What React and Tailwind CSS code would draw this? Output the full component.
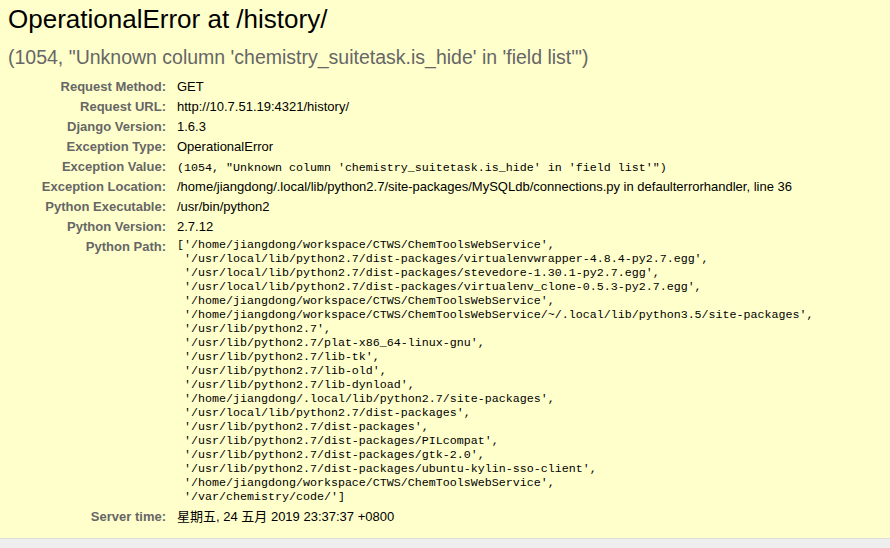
const sans = "font-['Liberation_Sans','Noto_Sans_CJK_SC',Arial,sans-serif]"
const mono = "font-['Liberation_Mono','Courier_New',monospace]"

const pythonPath = [
  "['/home/jiangdong/workspace/CTWS/ChemToolsWebService',",
  " '/usr/local/lib/python2.7/dist-packages/virtualenvwrapper-4.8.4-py2.7.egg',",
  " '/usr/local/lib/python2.7/dist-packages/stevedore-1.30.1-py2.7.egg',",
  " '/usr/local/lib/python2.7/dist-packages/virtualenv_clone-0.5.3-py2.7.egg',",
  " '/home/jiangdong/workspace/CTWS/ChemToolsWebService',",
  " '/home/jiangdong/workspace/CTWS/ChemToolsWebService/~/.local/lib/python3.5/site-packages',",
  " '/usr/lib/python2.7',",
  " '/usr/lib/python2.7/plat-x86_64-linux-gnu',",
  " '/usr/lib/python2.7/lib-tk',",
  " '/usr/lib/python2.7/lib-old',",
  " '/usr/lib/python2.7/lib-dynload',",
  " '/home/jiangdong/.local/lib/python2.7/site-packages',",
  " '/usr/local/lib/python2.7/dist-packages',",
  " '/usr/lib/python2.7/dist-packages',",
  " '/usr/lib/python2.7/dist-packages/PILcompat',",
  " '/usr/lib/python2.7/dist-packages/gtk-2.0',",
  " '/usr/lib/python2.7/dist-packages/ubuntu-kylin-sso-client',",
  " '/home/jiangdong/workspace/CTWS/ChemToolsWebService',",
  " '/var/chemistry/code/']",
]

function Row({ label, children }) {
  return (
    <>
      <div className="text-right font-bold text-[#666] leading-[20px] h-[20px] whitespace-nowrap">{label}</div>
      <div className="leading-[20px] h-[20px] overflow-visible whitespace-nowrap">{children}</div>
    </>
  )
}

function App() {
  return (
    <div className={`min-h-screen bg-[#eee] text-[13px] text-black ${sans}`}>
      {/* Summary */}
      <div className="bg-[#ffc] border-b border-[#ddd] pl-[8px] pb-[11px]">
        <h1 className="pt-[4px] text-[26px] leading-[30px] font-normal">OperationalError at /history/</h1>
        <p className="mt-[12px] text-[19.5px] leading-[22px] text-[#666]">
          (1054, "Unknown column 'chemistry_suitetask.is_hide' in 'field list'")
        </p>

        <div className="mt-[9px] grid grid-cols-[158px_1fr] gap-x-[11px]">
          <Row label="Request Method:">GET</Row>
          <Row label="Request URL:">http://10.7.51.19:4321/history/</Row>
          <Row label="Django Version:">1.6.3</Row>
          <Row label="Exception Type:">OperationalError</Row>
          <Row label="Exception Value:">
            <span className={`${mono} text-[11.67px] leading-[20px]`}>
              (1054, "Unknown column 'chemistry_suitetask.is_hide' in 'field list'")
            </span>
          </Row>
          <Row label="Exception Location:">
            /home/jiangdong/.local/lib/python2.7/site-packages/MySQLdb/connections.py in defaulterrorhandler, line 36
          </Row>
          <Row label="Python Executable:">/usr/bin/python2</Row>
          <Row label="Python Version:">2.7.12</Row>
          <div className="text-right font-bold text-[#666] leading-[20px] whitespace-nowrap">Python Path:</div>
          <pre className={`${mono} text-[11.67px] leading-[14px] mt-[1px] mb-[3px] whitespace-pre`}>
            {pythonPath.join('\n')}
          </pre>
          <Row label="Server time:">星期五, 24 五月 2019 23:37:37 +0800</Row>
        </div>
      </div>
    </div>
  )
}

export default App
